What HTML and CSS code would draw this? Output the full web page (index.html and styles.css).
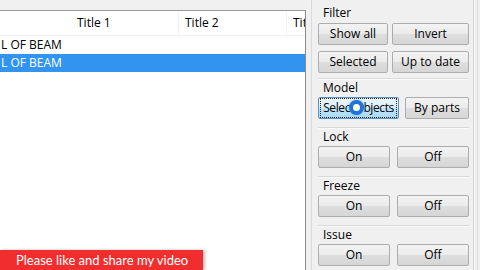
FILE: index.html
```html
<!DOCTYPE html>
<html>
<head>
<meta charset="utf-8">
<link rel="stylesheet" href="styles.css">
</head>
<body>
<div class="app">
  <div class="list">
    <div class="hdr">
      <span class="col c0"></span>
      <span class="col c1">Title 1</span>
      <span class="col c2">Title 2</span>
      <span class="col c3">Title 3</span>
    </div>
    <div class="row">L OF BEAM</div>
    <div class="row sel">L OF BEAM</div>
  </div>
  <div class="panel">
    <div class="group g-filter">
      <div class="lbl">Filter</div>
      <div class="btns filter">
        <div class="btn">Show all</div>
        <div class="btn">Invert</div>
        <div class="btn">Selected</div>
        <div class="btn">Up to date</div>
      </div>
    </div>
    <div class="group">
      <div class="lbl">Model</div>
      <div class="btns model">
        <div class="btn hot"><span class="focus">Select objects</span><span class="cursor"></span></div>
        <div class="btn">By parts</div>
      </div>
    </div>
    <div class="group">
      <div class="lbl">Lock</div>
      <div class="btns onoff">
        <div class="btn">On</div>
        <div class="btn">Off</div>
      </div>
    </div>
    <div class="group">
      <div class="lbl">Freeze</div>
      <div class="btns onoff">
        <div class="btn">On</div>
        <div class="btn">Off</div>
      </div>
    </div>
    <div class="group">
      <div class="lbl">Issue</div>
      <div class="btns onoff">
        <div class="btn">On</div>
        <div class="btn">Off</div>
      </div>
    </div>
  </div>
  <div class="edge"></div>
</div>
<div class="banner">Please like and share my video</div>
</body>
</html>
```

FILE: styles.css
```css
html, body {
  margin: 0;
  padding: 0;
}
body {
  width: 480px;
  height: 270px;
  overflow: hidden;
  background: #f0f0f0;
  font-family: "Open Sans", "Noto Sans", sans-serif;
  font-size: 12px;
  color: #000;
  position: relative;
}
.app {
  display: flex;
  height: 270px;
}
.list {
  flex: none;
  width: 305px;
  margin-top: 10px;
  background: #fff;
  border-top: 1px solid #9a9a9a;
  border-right: 1px solid #8a8a8a;
  overflow: hidden;
}
.hdr {
  display: flex;
  height: 24px;
  align-items: center;
  white-space: nowrap;
  border-bottom: 1px solid #f2f2f2;
}
.col {
  flex: none;
  padding-left: 6px;
  box-sizing: border-box;
  line-height: 24px;
  border-right: 1px solid #f3f3f3;
}
.c0 { width: 71px; }
.c1 { width: 108px; }
.c2 { width: 108px; }
.c3 { width: 60px; border-right: 0; }
.row {
  height: 18px;
  line-height: 18px;
  padding-left: 1px;
  white-space: nowrap;
}
.row.sel {
  background: #3394f0;
  color: #fff;
}
.panel {
  flex: none;
  width: 151px;
  margin-left: 5px;
  border-left: 1px solid #dadada;
  border-right: 1px solid #d6d6d6;
  padding: 0 4px 0 6px;
}
.edge {
  flex: none;
  width: 1px;
  margin-left: 3px;
  background: #dedede;
}
.group {
  border-top: 1px solid #dadada;
  box-shadow: inset 0 1px 0 #fafafa;
  padding: 1px 0 8px;
}
.g-filter {
  border-top: 0;
  box-shadow: none;
  padding: 5px 0 5px;
}
.lbl {
  line-height: 16px;
  height: 16px;
  padding-left: 5px;
  margin-bottom: 1px;
}
.g-filter .lbl { margin-bottom: 2px; }
.btns {
  display: grid;
  row-gap: 6px;
}
.filter { grid-template-columns: 70px 77px; column-gap: 4px; }
.model { grid-template-columns: 81px 64px; column-gap: 6px; }
.onoff { grid-template-columns: 72px 72px; column-gap: 7px; }
.btn {
  position: relative;
  height: 22px;
  box-sizing: border-box;
  border: 1px solid #adadad;
  border-radius: 2px;
  background: linear-gradient(#f3f3f3, #ebebeb 50%, #dedede 51%, #d6d6d6);
  display: flex;
  align-items: center;
  justify-content: center;
  white-space: nowrap;
  line-height: 16px;
}
.btn.hot {
  border-color: #5b8fbf;
  background: linear-gradient(#eaf6fd, #d9f0fc 50%, #bee6fd 51%, #a7d9f5);
}
.focus {
  outline: 1px dotted #222;
  outline-offset: 0;
  padding: 1px 0;
  margin: 0 2px;
  flex: 1;
  text-align: center;
  letter-spacing: -0.4px;
}
.cursor {
  position: absolute;
  left: 30px;
  top: 2px;
  width: 7px;
  height: 7px;
  border: 4px solid #1f74d8;
  border-radius: 50%;
  background: #fff;
  box-shadow: 0 0 2px #5aa0ee;
}
.banner {
  position: absolute;
  left: 0;
  top: 250px;
  width: 187px;
  height: 20px;
  padding-left: 16px;
  background: #f22d2d;
  color: #fff;
  font-family: Lato, "Open Sans", sans-serif;
  font-size: 13px;
  line-height: 20px;
  box-shadow: 2px 0 3px rgba(0,0,0,0.25);
  white-space: nowrap;
}
```
